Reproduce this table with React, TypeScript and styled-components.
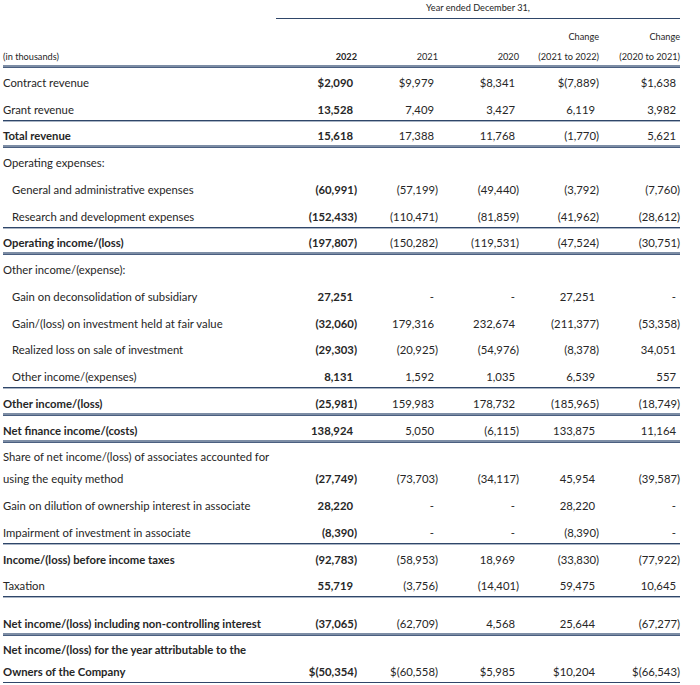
import React from "react";
import styled, { createGlobalStyle, css } from "styled-components";

const GlobalStyle = createGlobalStyle`
  html, body {
    margin: 0;
    padding: 0;
    background: #ffffff;
  }
`;

type LineKind = "none" | "thin" | "thick";

type RowData = {
  label: React.ReactNode;
  values?: string[];
  bold?: boolean;
  indent?: boolean;
  line?: LineKind;
  height?: number;
};

const ROW = 26.78;

const rows: RowData[] = [
  { label: "Contract revenue", values: ["$2,090", "$9,979", "$8,341", "$(7,889)", "$1,638"] },
  { label: "Grant revenue", values: ["13,528", "7,409", "3,427", "6,119", "3,982"], line: "thin" },
  { label: "Total revenue", values: ["15,618", "17,388", "11,768", "(1,770)", "5,621"], bold: true, line: "thick" },
  { label: "Operating expenses:" },
  { label: "General and administrative expenses", indent: true, values: ["(60,991)", "(57,199)", "(49,440)", "(3,792)", "(7,760)"] },
  { label: "Research and development expenses", indent: true, values: ["(152,433)", "(110,471)", "(81,859)", "(41,962)", "(28,612)"], line: "thin" },
  { label: "Operating income/(loss)", values: ["(197,807)", "(150,282)", "(119,531)", "(47,524)", "(30,751)"], bold: true, line: "thick" },
  { label: "Other income/(expense):" },
  { label: "Gain on deconsolidation of subsidiary", indent: true, values: ["27,251", "-", "-", "27,251", "-"] },
  { label: "Gain/(loss) on investment held at fair value", indent: true, values: ["(32,060)", "179,316", "232,674", "(211,377)", "(53,358)"] },
  { label: "Realized loss on sale of investment", indent: true, values: ["(29,303)", "(20,925)", "(54,976)", "(8,378)", "34,051"] },
  { label: "Other income/(expenses)", indent: true, values: ["8,131", "1,592", "1,035", "6,539", "557"], line: "thin" },
  { label: "Other income/(loss)", values: ["(25,981)", "159,983", "178,732", "(185,965)", "(18,749)"], bold: true, line: "thick" },
  { label: "Net finance income/(costs)", values: ["138,924", "5,050", "(6,115)", "133,875", "11,164"], bold: true, line: "thick" },
  {
    label: (
      <>
        Share of net income/(loss) of associates accounted for
        <br />
        using the equity method
      </>
    ),
    values: ["(27,749)", "(73,703)", "(34,117)", "45,954", "(39,587)"],
    height: 48.5,
  },
  { label: "Gain on dilution of ownership interest in associate", values: ["28,220", "-", "-", "28,220", "-"] },
  { label: "Impairment of investment in associate", values: ["(8,390)", "-", "-", "(8,390)", "-"], line: "thin" },
  { label: "Income/(loss) before income taxes", values: ["(92,783)", "(58,953)", "18,969", "(33,830)", "(77,922)"], bold: true },
  { label: "Taxation", values: ["55,719", "(3,756)", "(14,401)", "59,475", "10,645"], line: "thin" },
  {
    label: "Net income/(loss) including non-controlling interest",
    values: ["(37,065)", "(62,709)", "4,568", "25,644", "(67,277)"],
    bold: true,
    line: "thick",
    height: 38,
  },
  {
    label: (
      <>
        Net income/(loss) for the year attributable to the
        <br />
        Owners of the Company
      </>
    ),
    values: ["$(50,354)", "$(60,558)", "$5,985", "$10,204", "$(66,543)"],
    bold: true,
    line: "thin",
    height: 48,
  },
];

const columns = "273px 81px 81px 81px 80px 81px";

const Sheet = styled.div`
  width: 677px;
  padding: 0 0 0 3px;
  font-family: Lato, "Liberation Sans", sans-serif;
  font-size: 11.3px;
  color: #262626;
`;

const lineStyles = {
  none: css``,
  thin: css`
    box-shadow: inset 0 -1px 0 #2f4669, 0 1px 0 #aab5c5;
  `,
  thick: css`
    box-shadow: inset 0 -2px 0 #7d8da5, 0 1px 0 #4a5f80;
  `,
};

const Caption = styled.div`
  display: grid;
  grid-template-columns: ${columns};
  height: 19px;
  font-size: 9.2px;
`;

const CaptionText = styled.div`
  grid-column: 2 / 7;
  text-align: center;
  line-height: 16px;
  border-bottom: 1px solid #2f4669;
`;

const HeadRow = styled.div`
  display: grid;
  grid-template-columns: ${columns};
  align-items: end;
  height: 48px;
  font-size: 9.2px;
  line-height: 20px;
  ${lineStyles.thick}
`;

const HeadCell = styled.div<{ $bold?: boolean; $left?: boolean }>`
  text-align: ${(p) => (p.$left ? "left" : "right")};
  font-weight: ${(p) => (p.$bold ? 700 : 400)};
`;

const Row = styled.div<{ $line: LineKind; $height: number }>`
  display: grid;
  grid-template-columns: ${columns};
  align-items: end;
  height: ${(p) => p.$height}px;
  box-sizing: border-box;
  line-height: 22px;
  ${(p) => lineStyles[p.$line]}
`;

const Label = styled.div<{ $indent?: boolean; $bold?: boolean }>`
  white-space: nowrap;
  font-weight: ${(p) => (p.$bold ? 700 : 400)};
  padding-left: ${(p) => (p.$indent ? "9px" : "0")};
`;

const Num = styled.div<{ $hang: boolean; $bold: boolean }>`
  text-align: right;
  white-space: nowrap;
  padding-right: ${(p) => (p.$hang ? "0" : "4px")};
  font-weight: ${(p) => (p.$bold ? 700 : 400)};
`;

export default function App() {
  return (
    <>
      <GlobalStyle />
      <Sheet>
        <Caption>
          <CaptionText>Year ended December 31,</CaptionText>
        </Caption>
        <HeadRow>
          <HeadCell $left>(in thousands)</HeadCell>
          <HeadCell $bold>2022</HeadCell>
          <HeadCell>2021</HeadCell>
          <HeadCell>2020</HeadCell>
          <HeadCell>
            Change
            <br />
            (2021 to 2022)
          </HeadCell>
          <HeadCell>
            Change
            <br />
            (2020 to 2021)
          </HeadCell>
        </HeadRow>
        {rows.map((r, i) => (
          <Row key={i} $line={r.line ?? "none"} $height={r.height ?? ROW}>
            <Label $indent={r.indent} $bold={r.bold}>
              {r.label}
            </Label>
            {(r.values ?? []).map((v, j) => (
              <Num key={j} $hang={v.endsWith(")")} $bold={j === 0}>
                {v}
              </Num>
            ))}
          </Row>
        ))}
      </Sheet>
    </>
  );
}
